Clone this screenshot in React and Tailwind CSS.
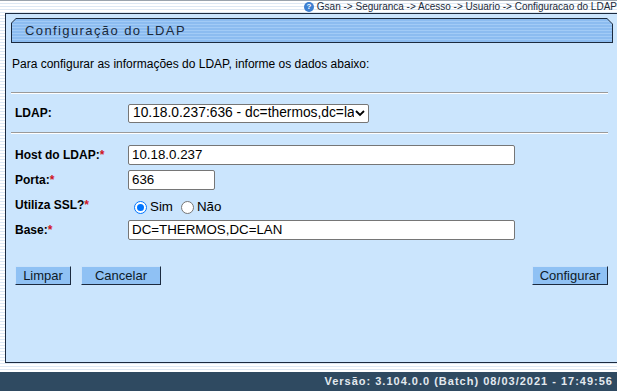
export default function App() {
  const stripes =
    "bg-[repeating-linear-gradient(180deg,#ffffff_0px,#ffffff_2px,#dde8f4_2px,#dde8f4_3px)]";

  const campos = [
    { label: "Host do LDAP:", value: "10.18.0.237", width: "w-[387px]" },
    { label: "Porta:", value: "636", width: "w-[87px]" },
  ];

  const botao =
    "h-[19px] bg-[#8fc1f4] border border-[#c9e2fb] border-r-[#1b2a3f] border-b-[#1b2a3f] text-[#0d1a28] text-[13px] leading-none";

  return (
    <div
      className={`w-[617px] h-[391px] overflow-hidden flex flex-col border-t border-[#9aa3ad] ${stripes} font-['Liberation_Sans',Arial,sans-serif] text-black`}
    >
      {/* Breadcrumb */}
      <div className="h-[11px] flex items-center justify-end gap-[3px] text-[10px] leading-none text-[#1d2b3a] whitespace-nowrap">
        <span className="w-[10px] h-[10px] rounded-full bg-[#3d7fd1] text-white text-[8px] font-bold flex items-center justify-center">?</span>
        <span>Gsan -&gt; Seguranca -&gt; Acesso -&gt; Usuario -&gt; Configuracao do LDAP</span>
      </div>

      {/* Painel */}
      <div className="ml-[5px] mt-[1px] w-[630px] h-[350px] shrink-0 border border-[#1b2a3f] bg-[#cbe5fd] pl-[5px] pt-[4px]">
        {/* Cabeçalho */}
        <div className="w-[602px] h-[25px] bg-[#1b2a3f] [clip-path:polygon(5px_0,596px_0,602px_6px,602px_100%,0_100%,0_5px)] p-[1px]">
          <div className="h-full bg-[repeating-linear-gradient(180deg,#8cbcf0_0px,#8cbcf0_2px,#a2cbf6_2px,#a2cbf6_3px)] [clip-path:polygon(4px_0,595px_0,600px_5px,600px_100%,0_100%,0_4px)] flex items-center pl-[13px] text-[13px] tracking-[1.4px] text-[#1a2a3c]">
            Configuração do LDAP
          </div>
        </div>

        <p className="mt-[14px] ml-[1px] text-[12px] leading-[14px]">
          Para configurar as informações do LDAP, informe os dados abaixo:
        </p>

        <div className="mt-[21px] w-[597px] h-[2px] border-t border-[#9a9a9a] border-b-white border-b" />

        <div className="flex items-center h-[38px] pl-[4px]">
          <span className="w-[113px] text-[12px] font-bold">LDAP:</span>
          <div className="w-[241px] h-[19px] bg-white border border-[#767676] rounded-[2px] flex items-center pl-[4px] pr-[3px] text-[13.8px] whitespace-nowrap">
            <span className="flex-1 overflow-hidden">10.18.0.237:636 - dc=thermos,dc=lan</span>
            <svg width="10" height="8" viewBox="0 0 10 8" className="shrink-0 ml-[1px]">
              <path d="M1 2 L5 6 L9 2" fill="none" stroke="#000" strokeWidth="1.8" />
            </svg>
          </div>
        </div>

        <div className="w-[597px] h-[2px] border-t border-[#9a9a9a] border-b-white border-b" />

        <div className="mt-[11px] pl-[4px] flex flex-col gap-[5px]">
          {campos.map((c) => (
            <div key={c.label} className="flex items-center h-[20px]">
              <span className="w-[113px] text-[12px] font-bold">
                {c.label}
                <span className="text-[#d0141e]">*</span>
              </span>
              <div className={`${c.width} h-[20px] bg-white border border-[#767676] rounded-[2px] flex items-center pl-[3px] text-[13.33px]`}>
                {c.value}
              </div>
            </div>
          ))}
          <div className="flex items-center h-[20px]">
            <span className="w-[113px] text-[12px] font-bold">
              Utiliza SSL?<span className="text-[#d0141e]">*</span>
            </span>
            <div className="flex items-center pt-[4px] text-[13.33px] pl-[6px]">
              <span className="w-[13px] h-[13px] rounded-full border border-[#0075ff] bg-white flex items-center justify-center">
                <span className="w-[7px] h-[7px] rounded-full bg-[#0075ff]" />
              </span>
              <span className="ml-[3px]">Sim</span>
              <span className="ml-[8px] w-[13px] h-[13px] rounded-full border border-[#767676] bg-white" />
              <span className="ml-[3px]">Não</span>
            </div>
          </div>
          <div className="flex items-center h-[20px]">
            <span className="w-[113px] text-[12px] font-bold">
              Base:<span className="text-[#d0141e]">*</span>
            </span>
            <div className="w-[387px] h-[20px] bg-white border border-[#767676] rounded-[2px] flex items-center pl-[3px] text-[13.33px]">
              DC=THERMOS,DC=LAN
            </div>
          </div>
        </div>

        {/* Botões */}
        <div className="mt-[26px] w-[597px] pl-[4px] flex items-center">
          <button className={`${botao} w-[56px]`}>Limpar</button>
          <button className={`${botao} ml-[10px] w-[80px]`}>Cancelar</button>
          <button className={`${botao} ml-auto w-[76px]`}>Configurar</button>
        </div>
      </div>

      <div className="flex-1" />

      {/* Rodapé */}
      <div className="h-[19px] shrink-0 bg-[#2f4a61] flex items-center justify-end pr-[4px] text-[11px] font-bold tracking-[1px] text-[#e3e9ef] whitespace-nowrap">
        Versão: 3.104.0.0 (Batch) 08/03/2021 - 17:49:56
      </div>
    </div>
  );
}
